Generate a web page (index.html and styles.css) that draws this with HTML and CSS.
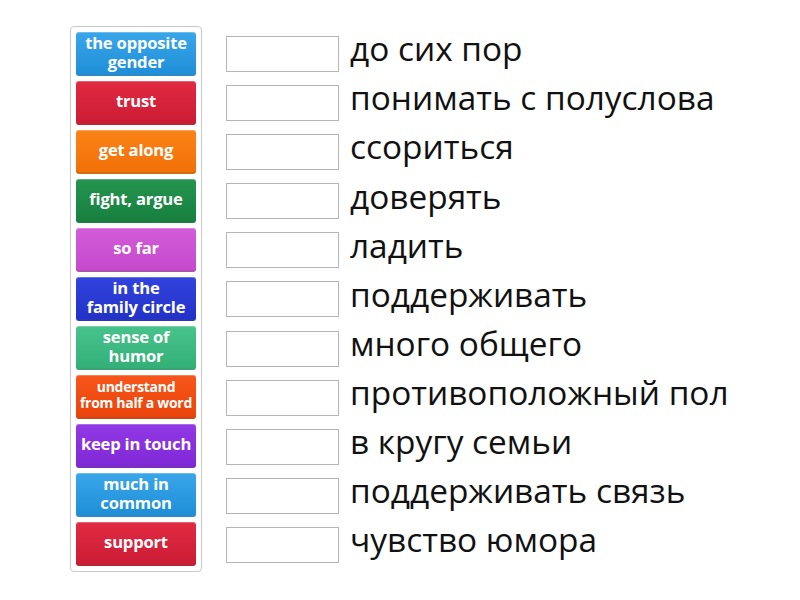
FILE: index.html
```html
<!DOCTYPE html>
<html>
<head>
<meta charset="utf-8">
<link rel="stylesheet" href="styles.css">
</head>
<body>
<div class="page">
  <div class="bank">
    <div class="tile c-blue">the opposite gender</div>
    <div class="tile c-red">trust</div>
    <div class="tile c-orange">get along</div>
    <div class="tile c-green">fight, argue</div>
    <div class="tile c-magenta">so far</div>
    <div class="tile c-navy">in the<br>family circle</div>
    <div class="tile c-teal">sense of humor</div>
    <div class="tile c-redorange small">understand<br>from half a word</div>
    <div class="tile c-purple">keep in touch</div>
    <div class="tile c-blue">much in common</div>
    <div class="tile c-red">support</div>
  </div>
  <div class="rows">
    <div class="row"><div class="slot"></div><span class="term">до сих пор</span></div>
    <div class="row"><div class="slot"></div><span class="term">понимать с полуслова</span></div>
    <div class="row"><div class="slot"></div><span class="term">ссориться</span></div>
    <div class="row"><div class="slot"></div><span class="term">доверять</span></div>
    <div class="row"><div class="slot"></div><span class="term">ладить</span></div>
    <div class="row"><div class="slot"></div><span class="term">поддерживать</span></div>
    <div class="row"><div class="slot"></div><span class="term">много общего</span></div>
    <div class="row"><div class="slot"></div><span class="term">противоположный пол</span></div>
    <div class="row"><div class="slot"></div><span class="term">в кругу семьи</span></div>
    <div class="row"><div class="slot"></div><span class="term">поддерживать связь</span></div>
    <div class="row"><div class="slot"></div><span class="term">чувство юмора</span></div>
  </div>
</div>
</body>
</html>
```

FILE: styles.css
```css
html, body {
  margin: 0;
  padding: 0;
  background: #fff;
}
body {
  font-family: "Open Sans", "Liberation Sans", sans-serif;
}
.page {
  display: flex;
  align-items: flex-start;
  padding: 26px 0 0 70px;
}
.bank {
  display: flex;
  flex-direction: column;
  gap: 5px;
  padding: 5px;
  border: 1px solid #c8c8c8;
  border-radius: 4px;
  width: 120px;
}
.tile {
  height: 44px;
  box-sizing: border-box;
  border-radius: 3px;
  color: #fff;
  font-weight: 700;
  font-size: 16.6px;
  line-height: 19px;
  display: flex;
  align-items: center;
  justify-content: center;
  text-align: center;
  padding: 0 1px 3px;
  border-bottom: 2px solid rgba(0,0,0,0.16);
  box-shadow: inset 0 1px 0 rgba(255,255,255,0.25);
  letter-spacing: -0.2px;
}
.tile.small {
  font-size: 14px;
  line-height: 16px;
  letter-spacing: -0.3px;
  padding: 0 0 3px;
}
.c-blue { background: linear-gradient(#3aa6ea, #1e8fd8); }
.c-red { background: linear-gradient(#e12a42, #cc1c35); }
.c-orange { background: linear-gradient(#fb8316, #f27008); }
.c-green { background: linear-gradient(#24954f, #18803f); }
.c-magenta { background: linear-gradient(#d35cda, #c44acb); }
.c-navy { background: linear-gradient(#3243de, #2232c8); }
.c-teal { background: linear-gradient(#47c38c, #33b077); }
.c-redorange { background: linear-gradient(#f7561a, #ea440a); }
.c-purple { background: linear-gradient(#9239e6, #7f28d6); }
.rows {
  display: flex;
  flex-direction: column;
  gap: 5.1px;
  margin-left: 24px;
  padding-top: 6px;
}
.row {
  height: 44px;
  display: flex;
  align-items: center;
}
.slot {
  width: 111px;
  height: 34px;
  border: 1px solid #b5b5b5;
  background: #fff;
  flex: none;
}
.term {
  margin-left: 11px;
  font-size: 33.4px;
  line-height: 1;
  color: #111;
  position: relative;
  top: -5px;
  white-space: nowrap;
}
```
